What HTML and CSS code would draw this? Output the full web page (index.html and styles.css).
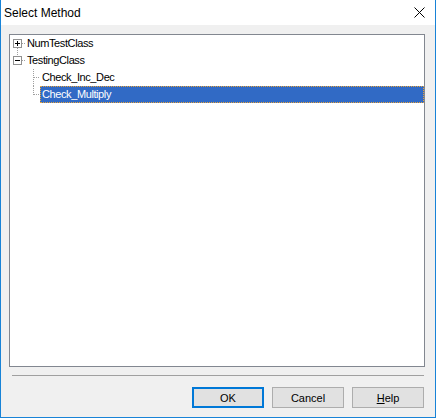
FILE: index.html
```html
<!DOCTYPE html>
<html>
<head>
<meta charset="utf-8">
<title>Select Method</title>
<link rel="stylesheet" href="styles.css">
</head>
<body>
<div class="window">
  <div class="titlebar">
    <span class="title">Select Method</span>
    <svg class="close" width="11" height="11" viewBox="0 0 11 11"><path d="M0.5 0.5L10.5 10.5M10.5 0.5L0.5 10.5" stroke="#000" stroke-width="1" fill="none"/></svg>
  </div>
  <div class="tree">
    <div class="row">
      <svg class="g0" width="15" height="17" viewBox="0 0 15 17">
        <rect x="3.5" y="4.5" width="8" height="8" fill="#fff" stroke="#919191"/>
        <path d="M5 8.5h5M7.5 6v5" stroke="#000"/>
        <path d="M12 8.5h3M7.5 13v4" stroke="#a0a0a0" stroke-dasharray="1 1"/>
      </svg>
      <span class="label">NumTestClass</span>
    </div>
    <div class="row">
      <svg class="g0" width="15" height="17" viewBox="0 0 15 17">
        <path d="M7.5 0v4M12 8.5h3" stroke="#a0a0a0" stroke-dasharray="1 1"/>
        <rect x="3.5" y="4.5" width="8" height="8" fill="#fff" stroke="#919191"/>
        <path d="M5 8.5h5" stroke="#000"/>
      </svg>
      <span class="label">TestingClass</span>
    </div>
    <div class="row">
      <svg class="g1" width="30" height="17" viewBox="0 0 30 17">
        <path d="M23.5 0v17M24 8.5h6" stroke="#a0a0a0" stroke-dasharray="1 1"/>
      </svg>
      <span class="label">Check_Inc_Dec</span>
    </div>
    <div class="row">
      <svg class="g1" width="30" height="17" viewBox="0 0 30 17">
        <path d="M23.5 0v9M24 8.5h6" stroke="#a0a0a0" stroke-dasharray="1 1"/>
      </svg>
      <span class="label selected">Check_Multiply</span>
    </div>
  </div>
  <div class="separator"></div>
  <div class="buttons">
    <button class="btn default">OK</button>
    <button class="btn">Cancel</button>
    <button class="btn"><u>H</u>elp</button>
  </div>
</div>
</body>
</html>
```

FILE: styles.css
```css
html, body {
  margin: 0;
  padding: 0;
  background: #f0f0f0;
}
.window {
  width: 436px;
  height: 418px;
  box-sizing: border-box;
  border: 1px solid #1883d7;
  border-top: none;
  background: #f0f0f0;
  display: flex;
  flex-direction: column;
  font-family: "Liberation Sans", Arial, sans-serif;
}
.titlebar {
  height: 25px;
  flex: none;
  background: #ffffff;
  display: flex;
  align-items: center;
  justify-content: space-between;
  padding-left: 3px;
  padding-right: 10px;
}
.title {
  font-size: 12px;
  color: #000;
}
.close {
  display: block;
}
.tree {
  margin: 9px 10px 0 8px;
  height: 333px;
  box-sizing: border-box;
  border: 1px solid #828790;
  background: #ffffff;
  flex: none;
}
.row {
  display: flex;
  height: 17px;
}
.row svg {
  display: block;
  flex: none;
}
.label {
  font-size: 11px;
  letter-spacing: -0.4px;
  line-height: 15px;
  height: 17px;
  box-sizing: border-box;
  border: 1px solid transparent;
  padding: 0 1px;
  color: #000;
  white-space: nowrap;
}
.label.selected {
  flex: 1;
  background: #316ac5;
  color: #ffffff;
  border: 1px dotted #e8a33a;
}
.separator {
  height: 1px;
  background: #a0a0a0;
  margin: 8px 11px 0 11px;
  flex: none;
}
.buttons {
  display: flex;
  justify-content: flex-end;
  gap: 8px;
  margin: 11px 11px 0 0;
}
.btn {
  width: 72px;
  height: 21px;
  box-sizing: border-box;
  background: #e1e1e1;
  border: 1px solid #adadad;
  font-family: "Liberation Sans", Arial, sans-serif;
  font-size: 11px;
  color: #000;
  padding: 0;
  margin: 0;
}
.btn.default {
  border: 2px solid #0078d7;
}
```
